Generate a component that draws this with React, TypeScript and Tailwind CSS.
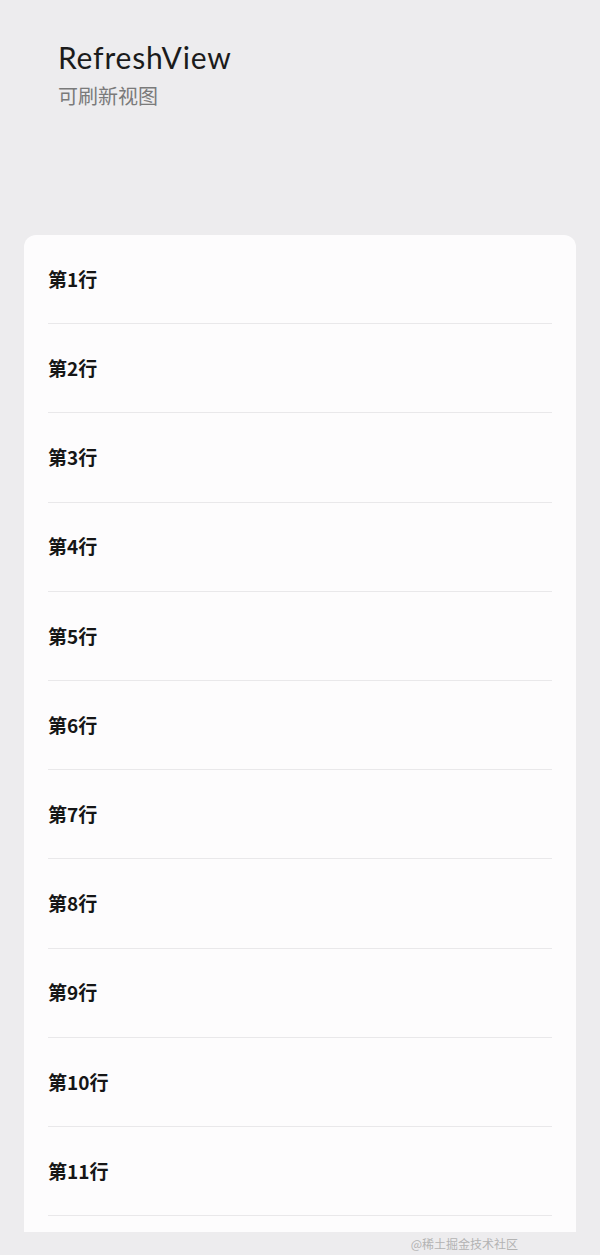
import React from 'react';

const rows = Array.from({ length: 11 }, (_, i) => `第${i + 1}行`);

export default function App() {
  return (
    <div className="w-[600px] h-[1255px] bg-[#edecee] flex flex-col overflow-hidden font-['Lato','Noto_Sans_CJK_SC',sans-serif]">
      {/* Header */}
      <div className="pl-[58px] pt-[38px] h-[235px]">
        <h1 className="text-[30px] leading-[38px] text-[#1b1b1b] font-normal tracking-[0.8px]">RefreshView</h1>
        <p className="mt-[7px] text-[20px] leading-[26px] text-[#7a7a7a] font-['Noto_Sans_CJK_SC',sans-serif]">可刷新视图</p>
      </div>

      {/* List card */}
      <div className="mx-[24px] h-[997px] shrink-0 bg-[#fdfcfd] rounded-t-[12px] overflow-hidden px-[24px]">
        {rows.map((row) => (
          <div
            key={row}
            className="h-[89.2px] flex items-center border-b border-[#e9e8ea] text-[19px] font-semibold text-[#161616] font-['Noto_Sans_CJK_SC',sans-serif]"
          >
            {row}
          </div>
        ))}
      </div>

      {/* Watermark */}
      <div className="flex-1 flex items-center justify-end pr-[82px]">
        <span className="text-[12px] text-[#b3b3b3] font-['Noto_Sans_CJK_SC',serif]">@稀土掘金技术社区</span>
      </div>
    </div>
  );
}
